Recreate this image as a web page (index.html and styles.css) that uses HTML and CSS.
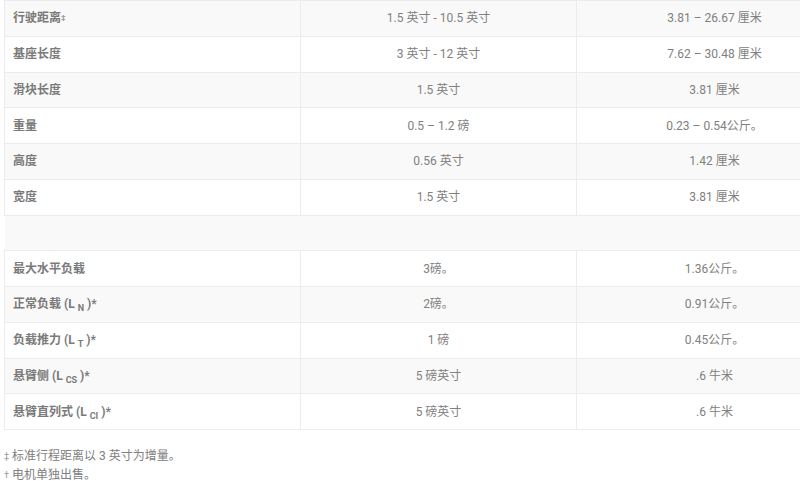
FILE: index.html
```
<!DOCTYPE html>
<html lang="zh">
<head>
<meta charset="utf-8">
<link rel="stylesheet" href="styles.css">
</head>
<body>
<div class="wrap">
<table class="spec">
  <colgroup><col class="c1"><col class="c2"><col class="c3"></colgroup>
  <tbody>
    <tr><td class="k">行驶距离<span class="mark">‡</span></td><td>1.5 英寸 - 10.5 英寸</td><td>3.81 – 26.67 厘米</td></tr>
    <tr><td class="k">基座长度</td><td>3 英寸 - 12 英寸</td><td>7.62 – 30.48 厘米</td></tr>
    <tr><td class="k">滑块长度</td><td>1.5 英寸</td><td>3.81 厘米</td></tr>
    <tr><td class="k">重量</td><td>0.5 – 1.2 磅</td><td>0.23 – 0.54公斤。</td></tr>
    <tr><td class="k">高度</td><td>0.56 英寸</td><td>1.42 厘米</td></tr>
    <tr><td class="k">宽度</td><td>1.5 英寸</td><td>3.81 厘米</td></tr>
    <tr><td class="empty" colspan="3"></td></tr>
    <tr><td class="k">最大水平负载</td><td>3磅。</td><td>1.36公斤。</td></tr>
    <tr><td class="k">正常负载 (L <sub>N</sub> )*</td><td>2磅。</td><td>0.91公斤。</td></tr>
    <tr><td class="k">负载推力 (L <sub>T</sub> )*</td><td>1 磅</td><td>0.45公斤。</td></tr>
    <tr><td class="k">悬臂侧 (L <sub>CS</sub> )*</td><td>5 磅英寸</td><td>.6 牛米</td></tr>
    <tr><td class="k">悬臂直列式 (L <sub>CI</sub> )*</td><td>5 磅英寸</td><td>.6 牛米</td></tr>
  </tbody>
</table>
</div>
<p class="notes"><span class="mark">‡</span> 标准行程距离以 3 英寸为增量。<br><span class="mark">†</span> 电机单独出售。</p>
</body>
</html>
```
FILE: styles.css
```
html, body {
  margin: 0;
  padding: 0;
  overflow: hidden;
  background: #fff;
}
body {
  padding: 0 0 0 4px;
  font-family: Roboto, "Noto Sans CJK SC", sans-serif;
  font-size: 12px;
  color: #808080;
}
.wrap {
  width: 796px;
  overflow: hidden;
}
.spec {
  border-collapse: collapse;
  width: 848px;
  table-layout: fixed;
}
.c1 { width: 296px; }
.c2 { width: 276px; }
.c3 { width: 276px; }
.spec td {
  border: 1px solid #ececec;
  height: 35.75px;
  box-sizing: border-box;
  padding: 0 8px;
  text-align: center;
  vertical-align: middle;
  line-height: 18px;
}
.spec tr:nth-child(odd) td { background: #f9f9f9; }
.spec td.k {
  text-align: left;
  font-weight: 700;
  color: #7a7a7a;
}
.spec td.empty { border-left: none; border-right: none; }
.mark { font-size: 8px; vertical-align: 2px; color: #999; }
sub { font-size: 9px; vertical-align: -3px; line-height: 0; }
.notes {
  margin: 17px 0 0;
  line-height: 19px;
}
.notes .mark { font-size: 9px; vertical-align: 1px; }
```
